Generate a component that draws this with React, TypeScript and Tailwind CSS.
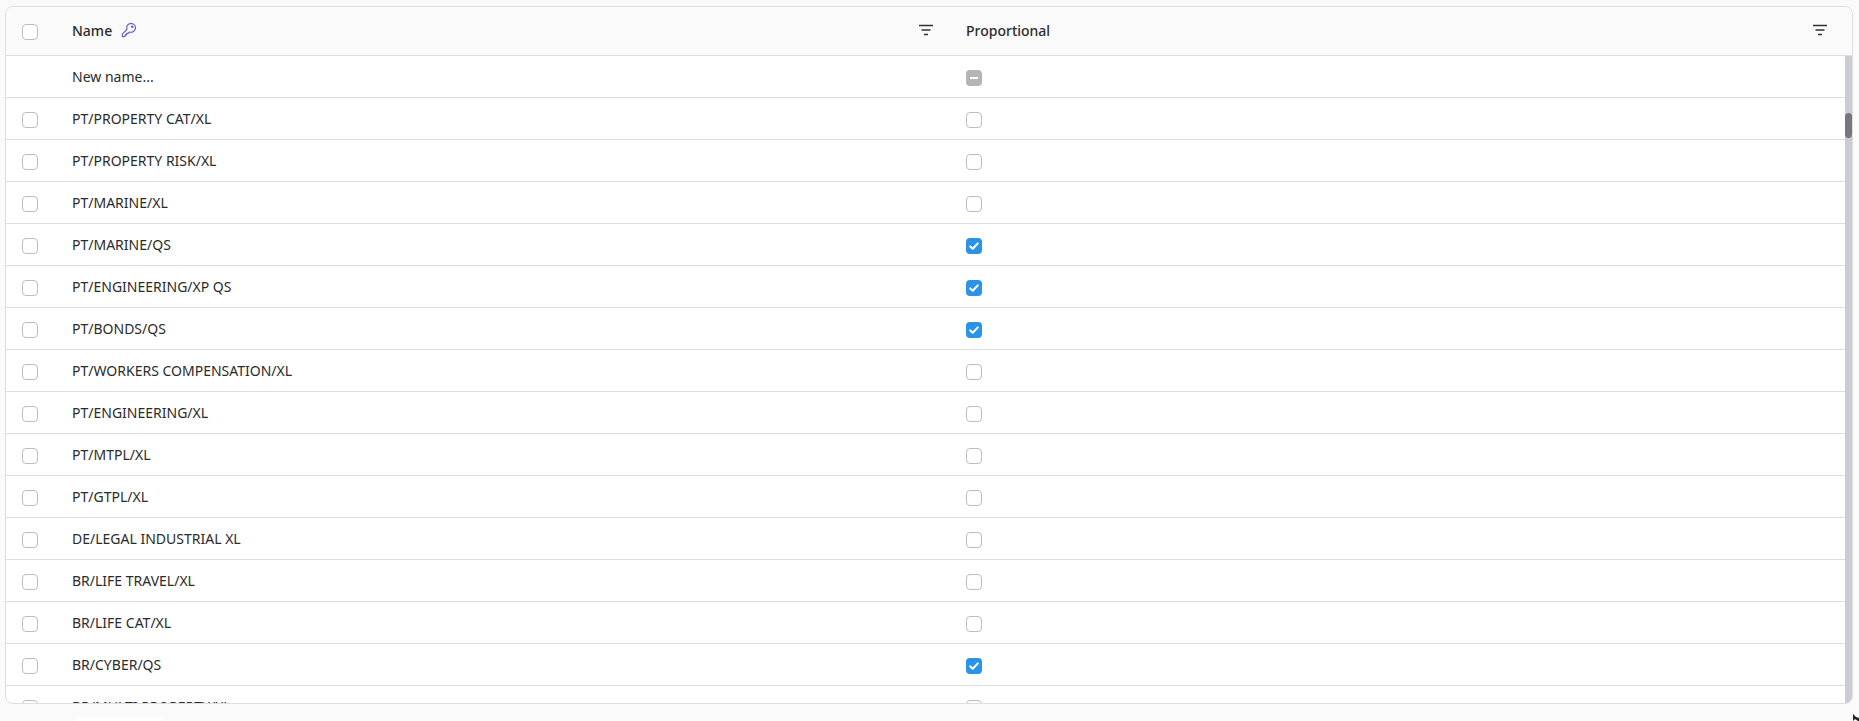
const rows: [string, boolean][] = [
  ["PT/PROPERTY CAT/XL", false],
  ["PT/PROPERTY RISK/XL", false],
  ["PT/MARINE/XL", false],
  ["PT/MARINE/QS", true],
  ["PT/ENGINEERING/XP QS", true],
  ["PT/BONDS/QS", true],
  ["PT/WORKERS COMPENSATION/XL", false],
  ["PT/ENGINEERING/XL", false],
  ["PT/MTPL/XL", false],
  ["PT/GTPL/XL", false],
  ["DE/LEGAL INDUSTRIAL XL", false],
  ["BR/LIFE TRAVEL/XL", false],
  ["BR/LIFE CAT/XL", false],
  ["BR/CYBER/QS", true],
  ["BR/MULTI PROPERTY/XL", false],
];

const Box = () => (
  <div className="mt-[3px] h-4 w-4 rounded-[4px] border border-[#bdbdbd] bg-white"></div>
);

const Checked = () => (
  <div className="mt-[3px] flex h-4 w-4 items-center justify-center rounded-[4px] bg-[#2b93e6]">
    <svg width="12" height="12" viewBox="0 0 12 12" fill="none">
      <path d="M2.2 6.4 4.8 8.8 9.8 3.4" stroke="white" strokeWidth="2" strokeLinecap="round" strokeLinejoin="round" />
    </svg>
  </div>
);

const Filter = () => (
  <svg width="14" height="12" viewBox="0 0 14 12" fill="none" stroke="#333333" strokeWidth="1.4">
    <path d="M0 1.5h14M2.5 6h9M5 10.5h4" />
  </svg>
);

const Key = () => (
  <svg width="16" height="16" viewBox="0 0 16 16" fill="none" stroke="#6a5fc1" strokeWidth="1.2" strokeLinejoin="round" strokeLinecap="round">
    <path d="M9.9 1.3a4.6 4.6 0 0 1 4.6 4.6 4.6 4.6 0 0 1-6 4.1L7.2 11.3H5.6v1.6H4.1v1.3a.6.6 0 0 1-.5.5H1.9a.6.6 0 0 1-.6-.6v-1.7a.8.8 0 0 1 .2-.5l4.4-4.4a4.6 4.6 0 0 1 4-6.2Z" />
    <circle cx="11.2" cy="4.8" r=".7" />
  </svg>
);

export default function App() {
  return (
    <div className="relative h-[721px] overflow-hidden bg-[#fafafa] pl-[5px] pr-[6px] pt-[6px] text-[14px] text-[#2b2b2b] font-['Noto_Sans',sans-serif]">
      <div className="h-[698px] overflow-hidden rounded-lg border border-[#dedede] bg-white">
        <div className="flex h-[49px] items-center border-b border-[#dedede] bg-[#fafafa] pb-0.5 font-medium">
          <div className="w-[66px] pl-4"><Box /></div>
          <div className="flex w-[894px] items-center pr-[33px]">
            <span>Name</span>
            <span className="ml-[9px]"><Key /></span>
            <span className="ml-auto"><Filter /></span>
          </div>
          <div className="flex flex-1 items-center pr-[25px]">
            <span>Proportional</span>
            <span className="ml-auto"><Filter /></span>
          </div>
        </div>
        <div className="flex">
          <div className="min-w-0 flex-1">
            <div className="flex h-[42px] items-center border-b border-[#dedede] pb-px">
              <div className="w-[66px]"></div>
              <div className="w-[894px]">New name...</div>
              <div className="mt-1 flex h-4 w-4 items-center justify-center rounded-[4px] bg-[#b5b5b5]">
                <div className="h-[2px] w-2 bg-white"></div>
              </div>
            </div>
            {rows.map(([name, checked]) => (
              <div key={name} className="flex h-[42px] items-center border-b border-[#dedede]">
                <div className="w-[66px] pl-4"><Box /></div>
                <div className="w-[894px]">{name}</div>
                {checked ? <Checked /> : <Box />}
              </div>
            ))}
          </div>
          <div className="h-[648px] w-[7px] shrink-0 bg-[#cbcbd3] pt-[57px]">
            <div className="h-[25px] w-[7px] rounded-full bg-[#77767f]"></div>
          </div>
        </div>
      </div>
      <div className="absolute left-[76px] top-[717px] h-[8px] w-[87px] rounded-t bg-white"></div>
      <svg className="absolute left-[1853px] top-[714px]" width="6" height="7" viewBox="0 0 6 7">
        <path d="M0 0v7l2-2 3 2h1V4L3 3Z" fill="#222" />
      </svg>
    </div>
  );
}
